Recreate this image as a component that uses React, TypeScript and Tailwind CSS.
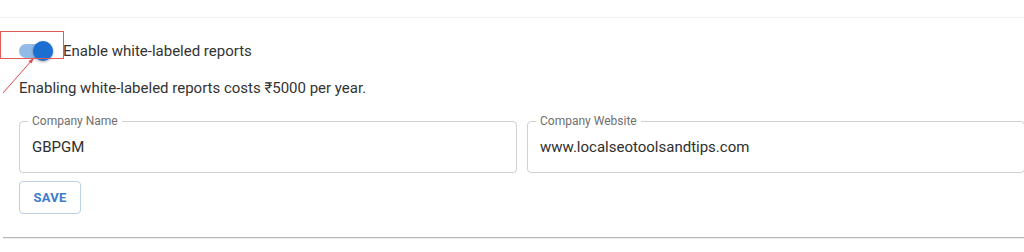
import React from 'react'

function Field({ label, value }: { label: string; value: string }) {
    return (
        <div className="relative flex h-[52px] items-center rounded-[4px] border border-[#d0d0d0] px-[12px]">
            <span className="absolute -top-[8px] left-[8px] bg-white px-[4px] text-[12px] leading-[14px] text-[#6f6f6f]">
                {label}
            </span>
            <span className="text-[15px] text-[#2e2e2e]">{value}</span>
        </div>
    )
}

export default function App() {
    return (
        <div
            className="relative h-[252px] w-[1024px] overflow-hidden bg-white text-[#333]"
            style={{ fontFamily: 'Roboto, "Liberation Sans", sans-serif' }}
        >
            <div className="h-[18px] border-b border-[#f3f3f3]" />

            {/* toggle row */}
            <div className="mt-[19px] flex h-[28px] items-center pl-[19px]">
                <div className="relative h-[14px] w-[34px] rounded-full bg-[#93bbe8]">
                    <span className="absolute -top-[3px] left-[14px] h-[20px] w-[20px] rounded-full bg-[#1a6fd0] shadow-[0_1px_3px_rgba(0,0,0,0.35)]" />
                </div>
                <span className="ml-[10px] text-[15px] leading-[20px]">Enable white-labeled reports</span>
            </div>

            <p className="mt-[13px] pl-[19px] text-[15px] leading-[20px]">
                Enabling white-labeled reports costs ₹5000 per year.
            </p>

            <div className="ml-[19px] mt-[23px] grid w-[1006px] grid-cols-2 gap-[10px]">
                <Field label="Company Name" value="GBPGM" />
                <Field label="Company Website" value="www.localseotoolsandtips.com" />
            </div>

            <button className="ml-[19px] mt-[8px] flex h-[33px] w-[62px] items-center justify-center rounded-[4px] border border-[#bcd0e6] text-[13px] font-bold tracking-[0.3px] text-[#3b7dcc]">
                SAVE
            </button>

            <div className="ml-[3px] mt-[23px] h-px bg-[#b8b8b8] shadow-[0_1px_1px_rgba(0,0,0,0.08)]" />

            {/* annotation overlay */}
            <div className="absolute left-0 top-[31px] h-[28px] w-[64px] border border-[#e05a5a]" />
            <svg className="absolute left-0 top-0" width="60" height="100" viewBox="0 0 60 100">
                <line x1="3" y1="93" x2="32" y2="60" stroke="#d94a4a" strokeWidth="1" />
                <path d="M34 58 L28.5 61 L31.5 63.5 Z" fill="#d94a4a" />
            </svg>
        </div>
    )
}
